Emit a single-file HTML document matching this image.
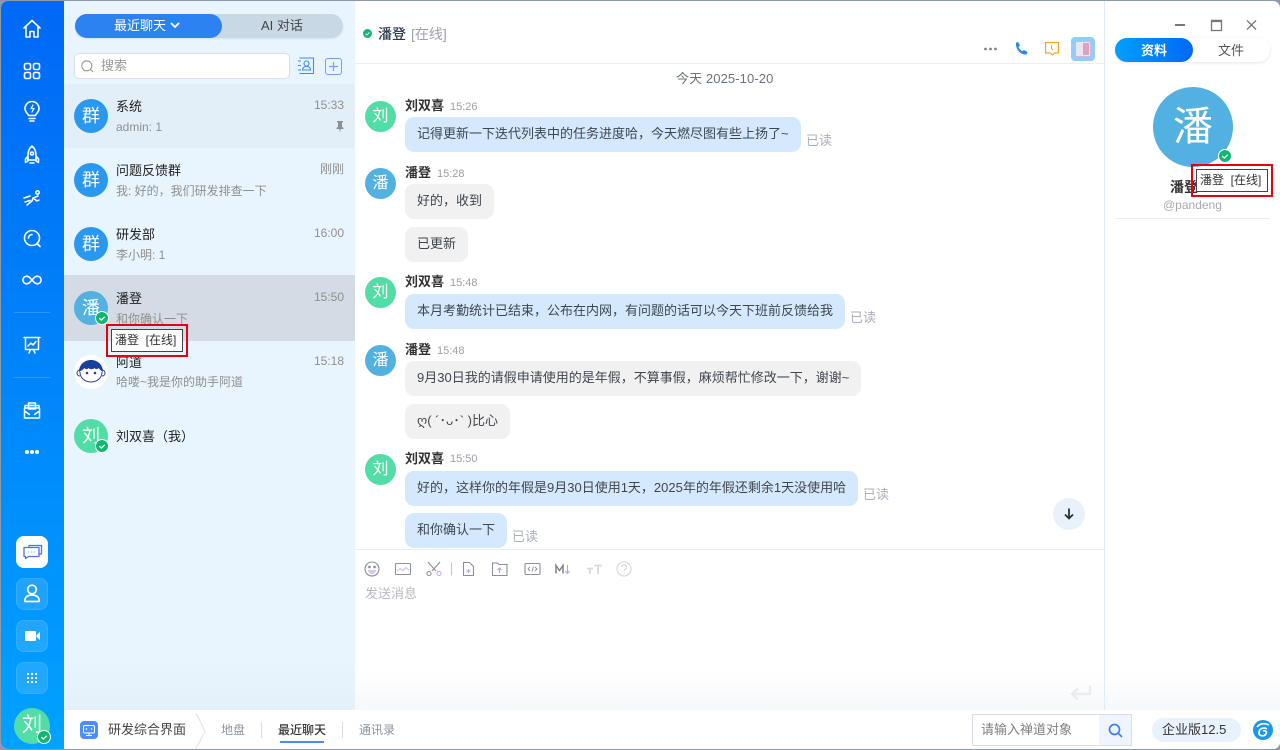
<!DOCTYPE html>
<html lang="zh"><head><meta charset="utf-8"><title>研发综合界面</title>
<style>
*{box-sizing:border-box}
html,body{margin:0;padding:0;width:1280px;height:750px;overflow:hidden;background:#8b9aa8}
body{font-family:"Liberation Sans","Noto Sans CJK SC",sans-serif;font-size:13px;color:#333}
.a,.t,.av,.b,svg{position:absolute}
.t{white-space:nowrap;line-height:18px}
#win{position:absolute;left:1px;top:1px;width:1279px;height:748px;border-radius:7px;overflow:hidden;background:#fff}
#stage{position:absolute;left:-1px;top:-1px;width:1280px;height:750px}
.av{border-radius:50%;color:#fff;text-align:center}
.s{width:34px;height:34px;line-height:34px;font-size:18px}
.m{width:31px;height:31px;line-height:32px;font-size:16px}
.g{background:#2b98ef}.p{background:#52b1e0}.l{background:#52dda6}
.b{border-radius:9px;height:35px;line-height:33px;padding:0 12px;font-size:13px;color:#3f4650;white-space:nowrap}
.me{background:#d4e9fd}.ot{background:#f1f1f1}
.n{font-weight:bold;font-size:13px;color:#333;margin-top:1px}
.tm{font-size:11px;color:#9aa0a8;margin-top:1px}
.rd{font-size:13px;color:#a9b0ba}
.ln{font-size:13px;color:#222;margin-top:1px}
.sm{font-size:12px;color:#8f8f8f}
.rt{margin-top:-1px}
.ok{position:absolute;border-radius:50%;background:#12b76f;border:1.5px solid #fff}
.tip{position:absolute;background:#fff;border:1px solid #444;font-size:12px;color:#333;line-height:21px;height:23px;width:72px;padding:0 3px;white-space:nowrap;outline:2px solid #e60012;outline-offset:3px}
.wb{position:absolute;left:16px;width:32px;height:32px;border-radius:8px;background:rgba(255,255,255,.13);border:1px solid rgba(255,255,255,.1)}
svg{overflow:visible}
</style></head><body>
<div id="win"><div id="stage">

<!-- left rail -->
<div class="a" style="left:0;top:0;width:64px;height:750px;background:linear-gradient(180deg,#0068f6,#00a2ff)"></div>
<svg style="left:0;top:0" width="64" height="480" fill="none" stroke="#fff" stroke-width="1.600" stroke-linejoin="round" stroke-linecap="round">
<path d="M24 28l8-7.500 8 7.500M26 26.500v10.500h4v-5.500h4v5.500h4v-10.500"/>
<rect x="24.500" y="63.500" width="6" height="6" rx="1.500"/><rect x="33.500" y="63.500" width="6" height="6" rx="1.500"/><rect x="24.500" y="72.500" width="6" height="6" rx="1.500"/><rect x="33.500" y="72.500" width="6" height="6" rx="1.500"/>
<path d="M28.500 115.500c0-1.500-3.500-3-3.500-7a7 7 0 0 1 14 0c0 4-3.500 5.500-3.500 7zM29 118.500h6M30 121h4"/><path d="M33 105l-2 3.500h3l-2 3.500" stroke-width="1.200"/>
<path d="M32 146c3 2.500 4 6 4 9v5h-8v-5c0-3 1-6.500 4-9zM28 156l-2.500 3v3.500l2.500-1.500M36 156l2.500 3v3.500l-2.500-1.500M30 163h4"/><circle cx="32" cy="153.500" r="1.500"/>
<path d="M24 198l6-2M25 202l5-1.500M27 205l5-4 1-3 5-2M33 198l4 3 2-1" stroke-width="1.500"/><circle cx="37.500" cy="192.500" r="1.700"/>
<circle cx="32" cy="238" r="7.500"/><path d="M37 243.500l3 3M28.500 238a3.500 3.500 0 0 1 3.500-3.500"/>
<path d="M32 280c-2-2.500-3.500-3.800-5.300-3.800a3.800 3.800 0 0 0 0 7.600c1.800 0 3.300-1.300 5.300-3.800s3.500-3.800 5.300-3.800a3.800 3.800 0 0 1 0 7.600c-1.800 0-3.300-1.300-5.300-3.800z"/>
<path d="M24 337.500h16M25.500 337.500v12h13v-12M29 353l1.500-3.500M35 353l-1.500-3.500M28 346l3-3 2 2 3-3.500" stroke-width="1.500"/>
<path d="M25 408v-2.500h14v2.500M24.500 408h15v10h-15zM24.500 411l5 3.500M39.500 411l-5 3.500M28.500 403h7v6h-7z" stroke-width="1.500"/>
</svg>
<div class="a" style="left:14px;top:312px;width:36px;height:1px;background:rgba(255,255,255,.18)"></div>
<div class="a" style="left:14px;top:377px;width:36px;height:1px;background:rgba(255,255,255,.18)"></div>
<svg style="left:0;top:440px" width="64" height="24" fill="#fff"><circle cx="27" cy="12" r="2"/><circle cx="32" cy="12" r="2"/><circle cx="37" cy="12" r="2"/></svg>
<div class="a" style="left:16px;top:536px;width:32px;height:32px;border-radius:8px;background:#fff"></div>
<svg style="left:16px;top:536px" width="32" height="32" fill="none" stroke="#4f6ff0" stroke-width="1.300" stroke-linejoin="round"><path d="M13 11v-1.500h12.500v8.500h-2"/><path d="M8 11.500h15v9h-10.500l-3 2v-2h-1.500z"/><path d="M12.500 16h.6M15.500 16h.6M18.500 16h.6" stroke-width="1.500" stroke="#7b8cf5"/></svg>
<div class="wb" style="top:578px"></div>
<svg style="left:16px;top:578px" width="32" height="32" fill="none" stroke="#fff" stroke-width="1.700"><circle cx="16" cy="11.500" r="4.300"/><path d="M9 23.500c-.8-4 2.500-6.500 7-6.500s7.800 2.500 7 6.500z" stroke-linejoin="round"/></svg>
<div class="wb" style="top:620px"></div>
<svg style="left:16px;top:620px" width="32" height="32" fill="#fff"><rect x="9" y="11" width="11" height="10" rx="1"/><path d="M20.500 15l3.500-3v8l-3.500-3z"/></svg>
<div class="wb" style="top:662px"></div>
<svg style="left:16px;top:662px" width="32" height="32" fill="#fff"><rect x="11" y="11" width="2" height="2"/><rect x="15" y="11" width="2" height="2"/><rect x="19" y="11" width="2" height="2"/><rect x="11" y="15" width="2" height="2"/><rect x="15" y="15" width="2" height="2"/><rect x="19" y="15" width="2" height="2"/><rect x="11" y="19" width="2" height="2"/><rect x="15" y="19" width="2" height="2"/><rect x="19" y="19" width="2" height="2"/></svg>
<div class="av l" style="left:14px;top:708px;width:36px;height:36px;line-height:34px;font-size:20px">刘</div>
<div class="ok" style="left:37px;top:730px;width:14px;height:14px"></div>
<svg style="left:37px;top:730px" width="14" height="14" fill="none" stroke="#fff" stroke-width="1.300"><path d="M4.300 7.200l2 1.800 3.400-3.200"/></svg>

<!-- list panel -->
<div class="a" style="left:64px;top:0;width:291px;height:711px;background:linear-gradient(180deg,#e9f5fe 0,#e9f5fe 660px,#e3eff9 711px)"></div>
<div class="a" style="left:75px;top:14px;width:268px;height:24px;border-radius:12px;background:#c9d8e5;box-shadow:0 1px 2px rgba(0,0,0,.08)"></div>
<div class="a" style="left:75px;top:14px;width:147px;height:24px;border-radius:12px;background:#2c82f0"></div>
<div class="t" style="left:114px;top:17px;color:#fff;font-size:13px">最近聊天</div>
<svg style="left:170px;top:22px" width="10" height="7" fill="none" stroke="#fff" stroke-width="1.800"><path d="M1 1l4 4 4-4"/></svg>
<div class="t" style="left:261px;top:17px;color:#444;font-size:13px">AI 对话</div>
<div class="a" style="left:74px;top:53px;width:216px;height:26px;background:#fff;border:1px solid #d9dfe5;border-radius:5px"></div>
<svg style="left:81px;top:60px" width="13" height="13" fill="none" stroke="#999" stroke-width="1.100"><circle cx="5.800" cy="5.800" r="5"/><path d="M9.500 9.500l2.500 2.500"/></svg>
<div class="t" style="left:101px;top:57px;color:#999;font-size:13px">搜索</div>
<svg style="left:298px;top:57px" width="18" height="18" fill="none" stroke="#3f8cf2" stroke-width="1.100"><path d="M1.500 1h14v15.500h-14M0 4h3M0 8.500h3M0 13h3"/><circle cx="8.500" cy="6.500" r="2.500"/><path d="M4.500 13c0-2.500 1.500-3.500 4-3.500s4 1 4 3.500z"/></svg>
<div class="a" style="left:325px;top:58px;width:17px;height:17px;border:1px solid #6aa5f5;border-radius:3px"></div>
<svg style="left:325px;top:58px" width="17" height="17" fill="none" stroke="#6aa5f5" stroke-width="1.200"><path d="M8.500 4v9M4 8.500h9"/></svg>

<div class="a" style="left:64px;top:84px;width:291px;height:64px;background:#e3eff8"></div>
<div class="a" style="left:64px;top:275px;width:291px;height:66px;background:#d3dce4"></div>

<div class="av s g" style="left:74px;top:99px">群</div>
<div class="t ln" style="left:116px;top:97px">系统</div><div class="t sm" style="left:116px;top:118px">admin: 1</div><div class="t sm rt" style="right:936px;top:97px">15:33</div>
<svg style="left:335px;top:121px" width="10" height="12" fill="#8a8f94"><path d="M2 0h6v1l-1 .8v3.700l1.500 1.500v1h-2.800l-.7 3.500-.7-3.500h-2.800v-1l1.500-1.500v-3.700l-1-.8z"/></svg>

<div class="av s g" style="left:74px;top:163px">群</div>
<div class="t ln" style="left:116px;top:161px">问题反馈群</div><div class="t sm" style="left:116px;top:182px">我: 好的，我们研发排查一下</div><div class="t sm rt" style="right:936px;top:161px">刚刚</div>

<div class="av s g" style="left:74px;top:227px">群</div>
<div class="t ln" style="left:116px;top:225px">研发部</div><div class="t sm" style="left:116px;top:246px">李小明: 1</div><div class="t sm rt" style="right:936px;top:225px">16:00</div>

<div class="av s p" style="left:74px;top:291px">潘</div>
<div class="ok" style="left:95px;top:311px;width:14px;height:14px"></div>
<svg style="left:95px;top:311px" width="14" height="14" fill="none" stroke="#fff" stroke-width="1.300"><path d="M4.300 7.200l2 1.800 3.400-3.200"/></svg>
<div class="t ln" style="left:116px;top:289px">潘登</div><div class="t sm" style="left:116px;top:310px">和你确认一下</div><div class="t sm rt" style="right:936px;top:289px">15:50</div>

<div class="av" style="left:74px;top:355px;width:34px;height:34px;background:#fff"></div>
<svg style="left:74px;top:355px" width="34" height="34"><path d="M5 17c0-7 5-12 12-12s12 5 12 12c-2-1-3-2.500-4.500-4-1 1.500-3 1.500-4 0-1 1.500-5 1.500-6 0-1 1.500-3 1.500-4 0-1.500 1.500-3.500 3-5.500 4z" fill="#1b3f9c"/><path d="M6 17c0 6 5 10 11 10s11-4 11-10M6 15c-4 0-4 6 0 6M28 15c4 0 4 6 0 6" fill="none" stroke="#27408f" stroke-width="1"/><circle cx="13" cy="18" r="1.300" fill="#27408f"/><circle cx="21" cy="18" r="1.300" fill="#27408f"/></svg>
<div class="t ln" style="left:116px;top:353px">阿道</div><div class="t sm" style="left:116px;top:373px">哈喽~我是你的助手阿道</div><div class="t sm rt" style="right:936px;top:353px">15:18</div>

<div class="av s l" style="left:74px;top:419px">刘</div>
<div class="ok" style="left:95px;top:439px;width:14px;height:14px"></div>
<svg style="left:95px;top:439px" width="14" height="14" fill="none" stroke="#fff" stroke-width="1.300"><path d="M4.300 7.200l2 1.800 3.400-3.200"/></svg>
<div class="t ln" style="left:116px;top:427px">刘双喜（我）</div>

<div class="tip" style="left:111px;top:329px">潘登&nbsp;&nbsp;[在线]</div>

<!-- chat header -->
<div class="a" style="left:355px;top:63px;width:750px;height:1px;background:#eceff2"></div>
<div class="a" style="left:363px;top:29px;width:9px;height:9px;border-radius:50%;background:#12b76f"></div>
<svg style="left:363px;top:29px" width="9" height="9" fill="none" stroke="#fff" stroke-width="1"><path d="M2.500 4.700l1.500 1.300 2.500-2.500"/></svg>
<div class="t" style="left:378px;top:25px;font-size:14px;color:#2d3a4d;font-weight:500">潘登</div>
<div class="t" style="left:411px;top:25px;font-size:14px;color:#9aa2ab">[在线]</div>
<svg style="left:983px;top:44px" width="16" height="10" fill="#7c8290"><circle cx="2.500" cy="5" r="1.400"/><circle cx="7.500" cy="5" r="1.400"/><circle cx="12.500" cy="5" r="1.400"/></svg>
<svg style="left:1014px;top:41px" width="15" height="15" fill="#2486ea"><path d="M1.500 2l2.500-1 2 3.500-1.500 1.500c.5 1.800 2 3.500 4 4.300l1.500-1.300 3.500 2-1 2.500c-6 .5-11-5-10.500-11.500z"/></svg>
<svg style="left:1044px;top:41px" width="16" height="16" fill="none" stroke="#f5a623" stroke-width="1.200"><path d="M1.500 1.500h13v10.500h-4l-2 2-2-2h-5z" stroke-linejoin="round"/><path d="M7.500 4v3.500l1.500 1.500" stroke-width="1"/></svg>
<div class="a" style="left:1071px;top:37px;width:24px;height:24px;border-radius:4px;background:#90cdf8"></div>
<div class="a" style="left:1075px;top:41px;width:16px;height:16px;border-radius:2px;background:#e5e9ee;border:1px solid #d8b5d0"></div>
<div class="a" style="left:1083px;top:43px;width:6px;height:12px;background:#d7a3c6"></div>

<!-- messages -->
<div class="t" style="left:676px;top:70px;font-size:13px;color:#6a727c;letter-spacing:.1px">今天 2025-10-20</div>

<div class="av m l" style="left:365px;top:101px">刘</div>
<div class="t n" style="left:405px;top:96px">刘双喜</div><div class="t tm" style="left:450px;top:97px">15:26</div>
<div class="b me" style="left:405px;top:117px">记得更新一下迭代列表中的任务进度哈，今天燃尽图有些上扬了~</div>
<div class="t rd" style="left:806px;top:132px">已读</div>

<div class="av m p" style="left:365px;top:168px">潘</div>
<div class="t n" style="left:405px;top:163px">潘登</div><div class="t tm" style="left:437px;top:164px">15:28</div>
<div class="b ot" style="left:405px;top:184px">好的，收到</div>
<div class="b ot" style="left:405px;top:227px">已更新</div>

<div class="av m l" style="left:365px;top:277px">刘</div>
<div class="t n" style="left:405px;top:272px">刘双喜</div><div class="t tm" style="left:450px;top:273px">15:48</div>
<div class="b me" style="left:405px;top:294px">本月考勤统计已结束，公布在内网，有问题的话可以今天下班前反馈给我</div>
<div class="t rd" style="left:850px;top:309px">已读</div>

<div class="av m p" style="left:365px;top:345px">潘</div>
<div class="t n" style="left:405px;top:340px">潘登</div><div class="t tm" style="left:437px;top:341px">15:48</div>
<div class="b ot" style="left:405px;top:361px">9月30日我的请假申请使用的是年假，不算事假，麻烦帮忙修改一下，谢谢~</div>
<div class="b ot" style="left:405px;top:404px">ღ( ´･ᴗ･` )比心</div>

<div class="av m l" style="left:365px;top:454px">刘</div>
<div class="t n" style="left:405px;top:449px">刘双喜</div><div class="t tm" style="left:450px;top:449px">15:50</div>
<div class="b me" style="left:405px;top:471px">好的，这样你的年假是9月30日使用1天，2025年的年假还剩余1天没使用哈</div>
<div class="t rd" style="left:863px;top:486px">已读</div>
<div class="b me" style="left:405px;top:513px">和你确认一下</div>
<div class="t rd" style="left:512px;top:528px">已读</div>

<div class="a" style="left:1053px;top:498px;width:32px;height:32px;border-radius:50%;background:#e9f2fa"></div>
<svg style="left:1053px;top:498px" width="32" height="32" fill="none" stroke="#2b2f36" stroke-width="1.800"><path d="M16 10.500v10M12 16.500l4 4 4-4"/></svg>

<!-- input -->
<div class="a" style="left:355px;top:549px;width:750px;height:1px;background:#e6eef5"></div>
<svg style="left:364px;top:560px" width="270" height="18" fill="none" stroke="#8a8f98" stroke-width="1.100">
<circle cx="8" cy="9" r="7"/><circle cx="5.500" cy="7" r=".8" fill="#8a8f98"/><circle cx="10.500" cy="7" r=".8" fill="#8a8f98"/><path d="M4 10h8a4 4 0 0 1-8 0z" fill="#d8c3f3" stroke="none"/>
<rect x="31.500" y="3.500" width="15" height="11" rx="1"/><path d="M33 11l3-2.500 3 2 3-3 3 2.500" stroke="#d3b8f0"/>
<path d="M64 2l8 9M76 2l-8 9"/><circle cx="65" cy="13.500" r="2"/><circle cx="75" cy="13.500" r="2" stroke="#c9a8ef"/>
<path d="M87.500 2.500v13" stroke="#d3b8f0"/>
<path d="M99.500 2.500h6l4 4v9h-10z"/><path d="M102.500 11h4M104.500 9v4" stroke="#b998ea"/>
<path d="M128.500 4.500v-1.500h5l1.500 1.500h8v11h-14.500z"/><path d="M135.500 13v-5M133.500 10l2-2 2 2" stroke="#b998ea"/>
<rect x="161" y="3.500" width="15" height="11" rx="1.500"/><path d="M166 7l-2 2 2 2M171 7l2 2-2 2M169.500 6.500l-1.500 5" stroke-width=".9"/>
<path d="M192 13.500v-8l3.500 5 3.500-5v8" stroke-width="1.500" stroke="#7d828c"/><path d="M203.500 5v8M201.500 11l2 2.500 2-2.500" stroke="#b8a5e8"/>
<g stroke="#d8dbdf" stroke-width="1.800"><path d="M230 5.500h8M234 5.500v8.500M223 8.500h6M226 8.500v5.500"/></g>
<circle cx="260" cy="9" r="7" stroke="#d3d6da"/><path d="M257.500 7a2.500 2.500 0 1 1 3.500 2.500c-1 .5-1 1-1 2M260 13v.8" stroke="#d3d6da"/>
</svg>
<div class="t" style="left:365px;top:585px;font-size:13px;color:#b5bbc3">发送消息</div>
<div class="a" style="left:355px;top:670px;width:750px;height:41px;background:linear-gradient(180deg,#fff,#f5f8fc)"></div>
<svg style="left:1070px;top:684px" width="22" height="18" fill="none" stroke="#eaecee" stroke-width="2.400"><path d="M20 2v8h-17M8 4.500l-6 5.500 6 5.500"/></svg>

<!-- right panel -->
<div class="a" style="left:1104px;top:0;width:1px;height:711px;background:#dfebf6"></div>
<div class="a" style="left:1105px;top:670px;width:175px;height:41px;background:linear-gradient(180deg,#fff,#f5f8fc)"></div>
<svg style="left:1170px;top:15px" width="95" height="20" fill="none" stroke="#777" stroke-width="1.300"><path d="M5 10h10" stroke-width="2"/><rect x="41.500" y="5.500" width="10" height="10"/><path d="M41 6h11" stroke-width="2.200"/><path d="M77 5.500l9 9M86 5.500l-9 9"/></svg>
<div class="a" style="left:1115px;top:38px;width:155px;height:24px;border-radius:12px;background:#fff;box-shadow:0 1px 3px rgba(0,0,0,.1)"></div>
<div class="a" style="left:1115px;top:38px;width:78px;height:24px;border-radius:12px;background:linear-gradient(90deg,#00a0fb,#0068f6)"></div>
<div class="t" style="left:1141px;top:42px;color:#fff;font-size:13px;font-weight:bold">资料</div>
<div class="t" style="left:1218px;top:42px;color:#555;font-size:13px">文件</div>
<div class="av p" style="left:1153px;top:87px;width:80px;height:80px;line-height:80px;font-size:40px">潘</div>
<div class="ok" style="left:1218px;top:149px;width:14px;height:14px"></div>
<svg style="left:1218px;top:149px" width="14" height="14" fill="none" stroke="#fff" stroke-width="1.300"><path d="M4.300 7.200l2 1.800 3.400-3.200"/></svg>
<div class="t" style="left:1170px;top:178px;font-size:14px;font-weight:bold;color:#333">潘登</div>
<div class="t" style="left:1163px;top:196px;font-size:12px;color:#a5a9ae">@pandeng</div>
<div class="a" style="left:1115px;top:218px;width:155px;height:1px;background:#eceff2"></div>
<div class="tip" style="left:1196px;top:169px">潘登&nbsp;&nbsp;[在线]</div>

<!-- bottom bar -->
<div class="a" style="left:64px;top:710px;width:1216px;height:40px;background:#fff"></div>
<div class="a" style="left:80px;top:721px;width:18px;height:18px;border-radius:4px;background:#4a90f7"></div>
<svg style="left:80px;top:721px" width="18" height="18" fill="none" stroke="#fff" stroke-width="1"><rect x="3.500" y="4.500" width="11" height="7.500" rx="1.500"/><path d="M9 12v2M6 14.500h6"/><path d="M7 7l-1 1 1 1M11 7l1 1-1 1" stroke-width=".8"/></svg>
<div class="t" style="left:108px;top:721px;font-size:13px;color:#444">研发综合界面</div>
<svg style="left:195px;top:712px" width="12" height="38" fill="none" stroke="#dfe2e6"><path d="M1 1l9 18-9 18"/></svg>
<div class="t" style="left:221px;top:721px;font-size:12px;color:#8a94a0">地盘</div>
<div class="a" style="left:261px;top:722px;width:1px;height:16px;background:#d8dbdf"></div>
<div class="t" style="left:278px;top:721px;font-size:12px;color:#333;font-weight:500">最近聊天</div>
<div class="a" style="left:280px;top:741px;width:44px;height:2px;background:#4a8cf5"></div>
<div class="a" style="left:342px;top:722px;width:1px;height:16px;background:#d8dbdf"></div>
<div class="t" style="left:359px;top:721px;font-size:12px;color:#8a94a0">通讯录</div>
<div class="a" style="left:972px;top:714px;width:160px;height:32px;border:1px solid #d8dde3;background:#fff"></div>
<div class="a" style="left:1099px;top:715px;width:32px;height:30px;background:#eef5fe"></div>
<svg style="left:1107px;top:722px" width="17" height="17" fill="none" stroke="#3d7ff0" stroke-width="1.700"><circle cx="7.500" cy="7.500" r="5"/><path d="M11 11l4 4"/></svg>
<div class="t" style="left:981px;top:721px;font-size:13px;color:#7f7f7f">请输入禅道对象</div>
<div class="a" style="left:1152px;top:718px;width:89px;height:24px;border-radius:12px;background:#e8f2fd"></div>
<div class="t" style="left:1162px;top:721px;font-size:13px;color:#333">企业版12.5</div>
<div class="a" style="left:1253px;top:720px;width:20px;height:20px;border-radius:50%;background:#1a96ea"></div>
<svg style="left:1253px;top:720px" width="20" height="20" fill="none" stroke="#fff" stroke-width="1.700"><path d="M4 7c3-4 8-4 12-2M14 9c-3-2-8-1-8 4 0 3 5 4 7 1 1.500-2-1-4-3-3"/></svg>

</div></div>
</body></html>
